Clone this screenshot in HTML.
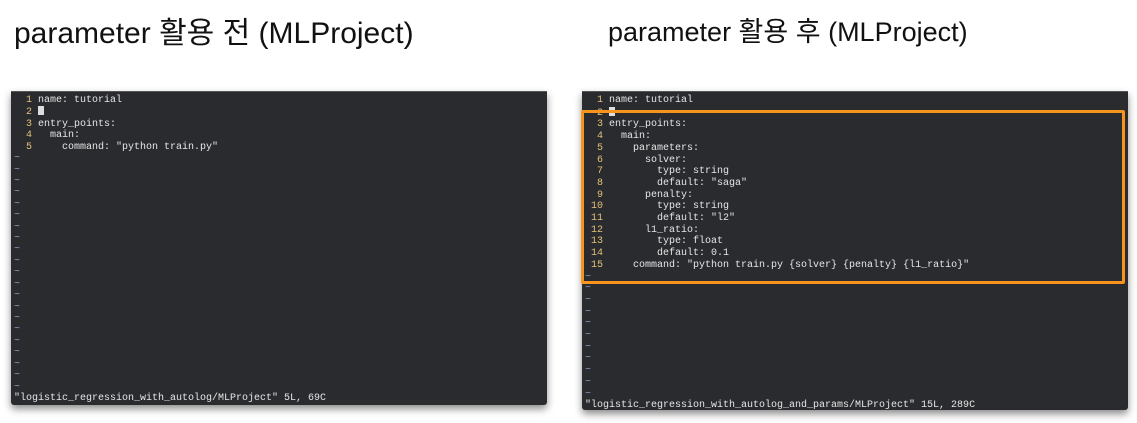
<!DOCTYPE html>
<html><head><meta charset="utf-8"><style>
body{margin:0;width:1137px;height:423px;background:#fff;position:relative;overflow:hidden;font-family:"Liberation Sans","Noto Sans CJK KR",sans-serif}
.t{position:absolute;top:8px;color:#111;white-space:nowrap}
.p{position:absolute;background:#2a2b2f;box-shadow:0 4px 8px rgba(0,0,0,.45);border-radius:0 0 3px 3px;font-family:"Liberation Mono",monospace;font-size:10px;color:#e6e6e6;border-top:1px solid #555;overflow:hidden}
.l{position:absolute;white-space:pre}
.n{color:#e2c07a}
.tl{color:#8a9fc0}
.cur{display:inline-block;width:6px;height:9px;background:#ddd;vertical-align:-1px}
</style></head><body>
<div class="t" style="left:14px;font-size:30px">parameter 활용 전 (MLProject)</div>
<div class="t" style="left:608px;font-size:27px;top:10px">parameter 활용 후 (MLProject)</div>

<div class="p" style="left:11px;top:91px;width:536px;height:313px">
<div class="l" style="left:3px;top:3px;line-height:11.42px"><span class="n">  1 </span>name: tutorial
<span class="n">  2 </span><span class="cur"></span>
<span class="n">  3 </span>entry_points:
<span class="n">  4 </span>  main:
<span class="n">  5 </span>    command: "python train.py"
<span class="tl">~
~
~
~
~
~
~
~
~
~
~
~
~
~
~
~
~
~
~
~
~</span>
"logistic_regression_with_autolog/MLProject" 5L, 69C</div>
</div>

<div class="p" style="left:582px;top:91px;width:546px;height:318px">
<div class="l" style="left:3px;top:3px;line-height:11.7px"><span class="n">  1 </span>name: tutorial
<span class="n">  2 </span><span class="cur"></span>
<span class="n">  3 </span>entry_points:
<span class="n">  4 </span>  main:
<span class="n">  5 </span>    parameters:
<span class="n">  6 </span>      solver:
<span class="n">  7 </span>        type: string
<span class="n">  8 </span>        default: "saga"
<span class="n">  9 </span>      penalty:
<span class="n"> 10 </span>        type: string
<span class="n"> 11 </span>        default: "l2"
<span class="n"> 12 </span>      l1_ratio:
<span class="n"> 13 </span>        type: float
<span class="n"> 14 </span>        default: 0.1
<span class="n"> 15 </span>    command: "python train.py {solver} {penalty} {l1_ratio}"
<span class="tl">~
~
~
~
~
~
~
~
~
~
~</span>
"logistic_regression_with_autolog_and_params/MLProject" 15L, 289C</div>
</div>
<div style="position:absolute;left:581px;top:110px;width:538px;height:168px;border:3px solid #f7941d;border-radius:2px"></div>
</body></html>
